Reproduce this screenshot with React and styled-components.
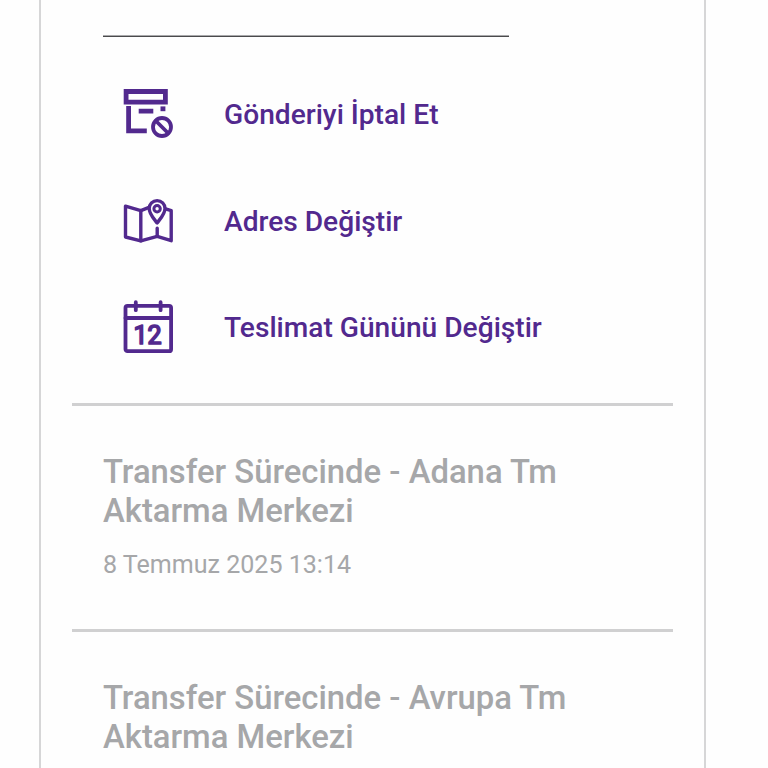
import styled, { createGlobalStyle } from 'styled-components'

const GlobalStyle = createGlobalStyle`
  * {
    box-sizing: border-box;
  }

  body {
    margin: 0;
    background: #fefefe;
    font-family: Roboto, sans-serif;
  }
`;

const Page = styled.div`
  height: 768px;
  padding: 0 62px 0 39px;
  overflow: hidden;
`;

const Card = styled.main`
  height: 768px;
  padding: 0 31px;
  border: solid #d6d6d7;
  border-width: 0 2px;
  overflow: hidden;
`;

const FieldLine = styled.hr`
  width: 406px;
  height: 2px;
  margin: 35px 0 0 31px;
  border: none;
  background: linear-gradient(#a9a9ab 50%, #4a4a4c 50%);
`;

const ActionList = styled.div`
  display: grid;
  grid-template-rows: 107px 106px 106px;
  padding: 25px 0 0 51px;
  height: 366px;
`;

const Action = styled.button`
  display: flex;
  align-items: center;
  gap: 51px;
  padding: 0;
  border: none;
  background: transparent;
  color: #52298e;
  cursor: pointer;
  height: 106px;
`;

const Icon = styled.svg`
  flex: none;
  width: 50px;
  height: 60px;
  fill: none;
  stroke: currentColor;
  stroke-width: ${props => props.$weight};
  stroke-linecap: round;
  stroke-linejoin: round;
`;

const ActionLabel = styled.span`
  font: 500 28.15px/34px Roboto, sans-serif;
`;

const Movement = styled.section`
  width: 601px;
  height: 226px;
  padding: 47px 31px 0;
  border-top: 3px solid #d0d0d1;
`;

const MovementTitle = styled.h2`
  margin: 0;
  color: #a6a7a9;
  font-size: 32.85px;
  font-weight: 500;
  line-height: 38.5px;
`;

const MovementDate = styled.p`
  margin: 20px 0 0;
  color: #a6a7a9;
  font-size: 25.05px;
  line-height: 30px;
`;

const CancelIcon = () => (
  <Icon viewBox="0 0 50 60" $weight="4.8">
    <g strokeLinejoin="miter" strokeLinecap="butt">
      <path d="M3.1 6.5H42.4V17.2H3.1z" />
      <path d="M5.6 21V45.8H23.8M15.7 26.2H30.3" />
      <path d="M37.5 23.8H42.4" />
    </g>
    <circle cx="39" cy="42" r="9" strokeWidth="3.8" />
    <path d="M33 36L45 48" strokeWidth="3.8" />
  </Icon>
);

const MapIcon = () => (
  <Icon viewBox="0 0 50 60" $weight="3.4">
    <path d="M26 15.3L17.8 18.6L2.5 14.2V45L17.8 48.9L34.2 44.4L48.2 48.7V18.6L42.6 16.8" />
    <path d="M17.8 18.6V48.9M34.2 36.2V44.4" />
    <path d="M34.1 31C30.6 26.2 26.2 22 26.2 16.5A7.9 7.9 0 0 1 42 16.5C42 22 37.6 26.2 34.1 31z" />
    <circle cx="34.1" cy="16.7" r="3.2" strokeWidth="3" />
  </Icon>
);

const CalendarIcon = () => (
  <Icon viewBox="0 0 50 60" $weight="3.8">
    <rect x="2.5" y="7.8" width="45.6" height="45.4" rx="2" />
    <path d="M2.5 20H48M12.8 4.2V12.2M37.6 4.2V12.2" />
    <text
      x="24.6"
      y="46.3"
      textAnchor="middle"
      fontFamily="Roboto, sans-serif"
      fontSize="25"
      fontWeight="400"
      fill="currentColor"
      strokeWidth="1.7"
    >
      12
    </text>
  </Icon>
);

const actions = [
  { label: 'Gönderiyi İptal Et', ActionIcon: CancelIcon },
  { label: 'Adres Değiştir', ActionIcon: MapIcon },
  { label: 'Teslimat Gününü Değiştir', ActionIcon: CalendarIcon },
];

const movements = [
  { title: 'Transfer Sürecinde - Adana Tm Aktarma Merkezi', date: '8 Temmuz 2025 13:14' },
  { title: 'Transfer Sürecinde - Avrupa Tm Aktarma Merkezi' },
];

const App = () => (
  <>
    <GlobalStyle />
    <Page>
      <Card>
        <FieldLine />
        <ActionList>
          {actions.map(({ label, ActionIcon }) => (
            <Action key={label}>
              <ActionIcon />
              <ActionLabel>{label}</ActionLabel>
            </Action>
          ))}
        </ActionList>
        {movements.map(({ title, date }) => (
          <Movement key={title}>
            <MovementTitle>{title}</MovementTitle>
            {date && <MovementDate>{date}</MovementDate>}
          </Movement>
        ))}
      </Card>
    </Page>
  </>
);

export default App
